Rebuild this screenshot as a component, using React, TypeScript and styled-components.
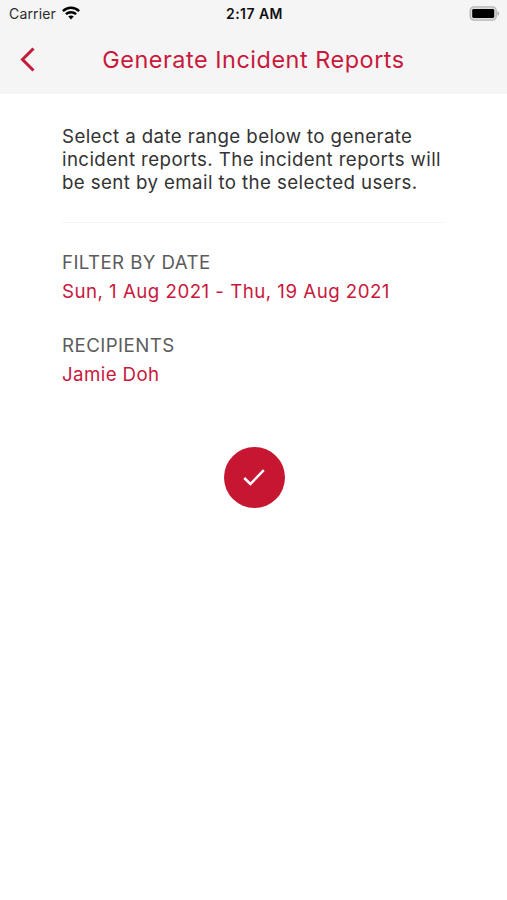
import React from "react";
import styled, { createGlobalStyle } from "styled-components";

const GlobalStyle = createGlobalStyle`
  * { box-sizing: border-box; }
  body { margin: 0; background: #ffffff; font-family: Inter, "Liberation Sans", sans-serif; }
`;

const Screen = styled.div`
  width: 507px;
  height: 900px;
  background: #ffffff;
  overflow: hidden;
`;

const Header = styled.header`
  height: 94px;
  background: #f5f5f5;
`;

const StatusBar = styled.div`
  display: grid;
  grid-template-columns: 1fr auto 1fr;
  align-items: center;
  height: 27px;
  padding: 0 7px 0 9px;
  color: #111111;
`;

const Carrier = styled.div`
  display: flex;
  align-items: center;
  gap: 6px;
  font-size: 14px;
  line-height: 27px;
  letter-spacing: 0.15px;
  color: #2b2b2b;

  svg {
    margin-bottom: 2px;
  }
`;

const Clock = styled.div`
  padding-top: 1px;
  font-size: 14px;
  font-weight: 600;
  line-height: 26px;
  letter-spacing: 0.45px;
`;

const Battery = styled.div`
  display: flex;
  justify-content: flex-end;
`;

const TitleBar = styled.div`
  display: grid;
  grid-template-columns: 80px 1fr 80px;
  align-items: center;
  height: 66px;
`;

const BackButton = styled.button`
  display: flex;
  align-items: center;
  width: 56px;
  height: 44px;
  padding: 0 0 2px 19px;
  border: 0;
  background: none;
`;

const Title = styled.h1`
  margin: 0;
  text-align: center;
  white-space: nowrap;
  font-size: 23.4px;
  font-weight: 400;
  line-height: 30px;
  letter-spacing: 0.54px;
  color: #c8193c;
`;

const Content = styled.main`
  display: flex;
  flex-direction: column;
  padding: 31px 62px 0;
`;

const Intro = styled.p`
  margin: 0;
  padding-bottom: 27px;
  border-bottom: 1px solid #f5f5f5;
  white-space: nowrap;
  font-size: 18.7px;
  line-height: 23.2px;
  letter-spacing: 0.4px;
  color: #333333;
`;

const Field = styled.section<{ $gap: number }>`
  margin-top: ${({ $gap }) => $gap}px;
  font-size: 18.7px;
  line-height: 29px;
`;

const Label = styled.div<{ $spacing: number }>`
  letter-spacing: ${({ $spacing }) => $spacing}px;
  color: #5c5c5c;
`;

const Value = styled.div<{ $spacing: number }>`
  letter-spacing: ${({ $spacing }) => $spacing}px;
  color: #c8193c;
`;

const ConfirmButton = styled.button`
  display: flex;
  align-items: center;
  justify-content: center;
  align-self: center;
  width: 61px;
  height: 61px;
  margin: 58px 0 0 1px;
  padding: 0;
  border: 0;
  border-radius: 50%;
  background: #c61632;
`;

const WifiIcon = () => (
  <svg width="18" height="14" viewBox="0 0 18 14" fill="none" stroke="#000" strokeWidth="2.5">
    <path d="M0.9 5.1C5.5 0.7 12.5 0.7 17.1 5.1" />
    <path d="M3.9 8.2C6.8 5.5 11.2 5.5 14.1 8.2" />
    <path d="M6.2 10.5C7.8 9 10.2 9 11.8 10.5L9 13.4Z" fill="#000" stroke="none" />
  </svg>
);

const BatteryIcon = () => (
  <svg width="31" height="15" viewBox="0 0 31 15">
    <rect x="1.2" y="0.9" width="26" height="13.2" rx="3.8" fill="#dcdcdc" stroke="#b4b4b4" strokeWidth="1.3" />
    <rect x="3.2" y="3" width="22" height="9" rx="1.4" fill="#000" />
    <path d="M28.5 5.2C30.6 5.8 30.6 9.2 28.5 9.8Z" fill="#a8a8a8" />
  </svg>
);

const BackIcon = () => (
  <svg width="17" height="25" viewBox="0 0 17 25" fill="none" stroke="#c61a3b" strokeWidth="3">
    <path d="M14.5 1.5L3.5 12.5L14.5 23.5" />
  </svg>
);

const CheckIcon = () => (
  <svg width="24" height="20" viewBox="0 0 24 20" fill="none" stroke="#fff" strokeWidth="2.5">
    <path d="M2.2 11L8.4 17L21.8 3.2" />
  </svg>
);

export default function App() {
  return (
    <>
      <GlobalStyle />
      <Screen>
        <Header>
          <StatusBar>
            <Carrier>
              <span>Carrier</span>
              <WifiIcon />
            </Carrier>
            <Clock>2:17 AM</Clock>
            <Battery>
              <BatteryIcon />
            </Battery>
          </StatusBar>
          <TitleBar>
            <BackButton aria-label="Back">
              <BackIcon />
            </BackButton>
            <Title>Generate Incident Reports</Title>
          </TitleBar>
        </Header>
        <Content>
          <Intro>
            Select a date range below to generate
            <br />
            incident reports. The incident reports will
            <br />
            be sent by email to the selected users.
          </Intro>
          <Field $gap={25}>
            <Label $spacing={0.4}>FILTER BY DATE</Label>
            <Value $spacing={0.48}>Sun, 1 Aug 2021 - Thu, 19 Aug 2021</Value>
          </Field>
          <Field $gap={25}>
            <Label $spacing={0.44}>RECIPIENTS</Label>
            <Value $spacing={0.4}>Jamie Doh</Value>
          </Field>
          <ConfirmButton aria-label="Generate reports">
            <CheckIcon />
          </ConfirmButton>
        </Content>
      </Screen>
    </>
  );
}
